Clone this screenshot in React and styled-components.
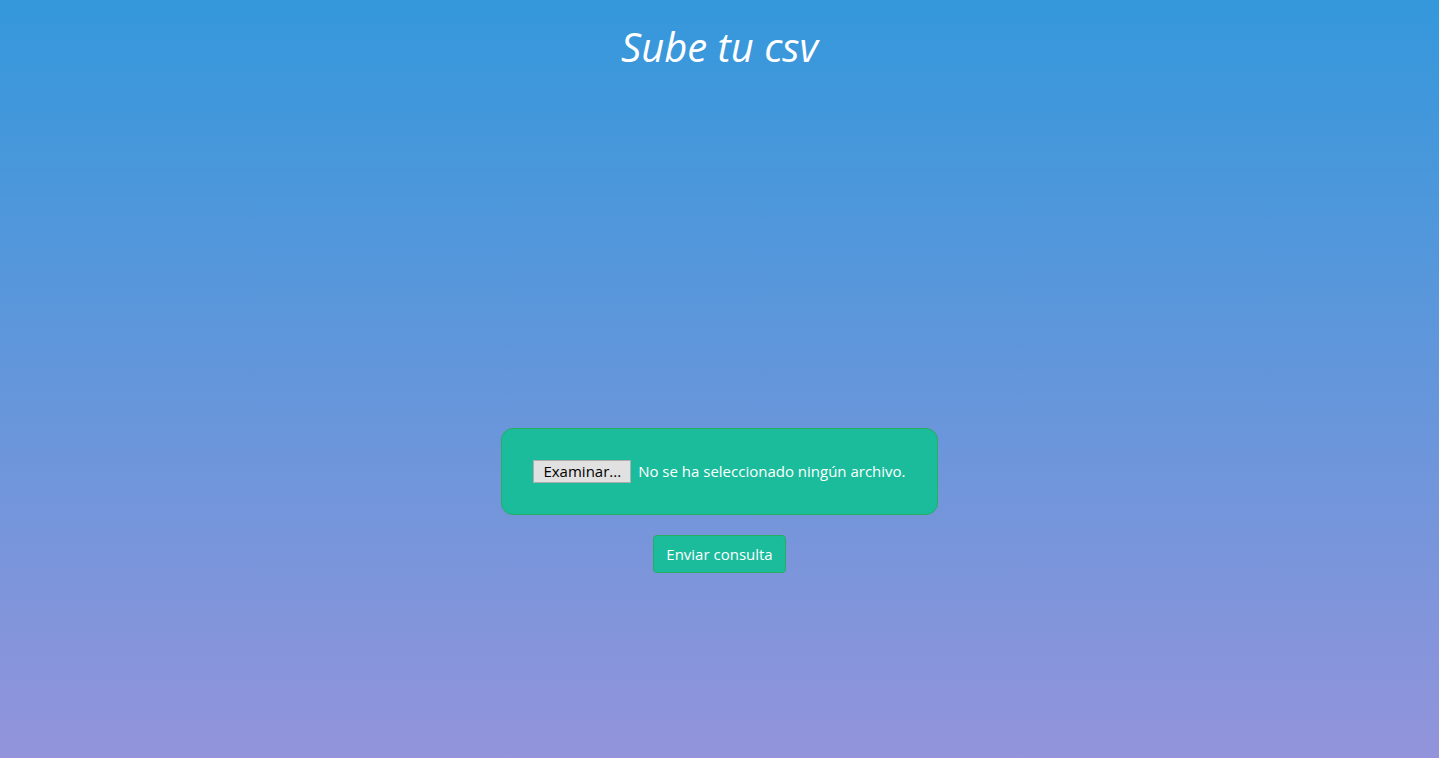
import React, { useRef, useState } from "react";
import styled, { createGlobalStyle } from "styled-components";

const GlobalStyle = createGlobalStyle`
  *, *::before, *::after { box-sizing: border-box; }
  body {
    margin: 0;
    color: #fff;
    font-family: "Segoe UI", "Open Sans", sans-serif;
    font-size: 15px;
    line-height: 23px;
  }
`;

const Page = styled.main`
  display: flow-root;
  min-height: 100vh;
  background: linear-gradient(to bottom, #3498db, #9394db);
`;

const Title = styled.h1`
  margin: 20px 0 0;
  font-size: 40px;
  font-style: italic;
  font-weight: 400;
  line-height: 54px;
  text-align: center;
`;

const UploadForm = styled.form`
  display: flex;
  flex-direction: column;
  align-items: center;
  gap: 20px;
  margin-top: 354px;
`;

const DropBox = styled.div`
  display: flex;
  align-items: center;
  gap: 7px;
  padding: 31px;
  background: #1abc9c;
  border: 1px solid #27ae60;
  border-radius: 12px;
`;

const BrowseButton = styled.button`
  height: 23px;
  padding: 0 9px;
  background: #e1e1e1;
  border: 1px solid #adadad;
  color: #000;
  font: inherit;
  line-height: 21px;
`;

const FileStatus = styled.label`
  display: block;
`;

const SubmitButton = styled.button`
  padding: 6px 12px;
  background: #1abc9c;
  border: 1px solid #27ae60;
  border-radius: 4px;
  color: #fff;
  font: inherit;
  line-height: 24px;
`;

export default function App() {
  const fileInput = useRef(null);
  const [fileName, setFileName] = useState("");

  return (
    <>
      <GlobalStyle />
      <Page>
        <Title>Sube tu csv</Title>
        <UploadForm onSubmit={(event) => event.preventDefault()}>
          <DropBox>
            <BrowseButton type="button" onClick={() => fileInput.current.click()}>
              Examinar...
            </BrowseButton>
            <FileStatus htmlFor="csv">
              {fileName || "No se ha seleccionado ningún archivo."}
            </FileStatus>
            <input
              ref={fileInput}
              id="csv"
              type="file"
              accept=".csv"
              hidden
              onChange={(event) => setFileName(event.target.files[0]?.name ?? "")}
            />
          </DropBox>
          <SubmitButton type="submit">Enviar consulta</SubmitButton>
        </UploadForm>
      </Page>
    </>
  );
}
